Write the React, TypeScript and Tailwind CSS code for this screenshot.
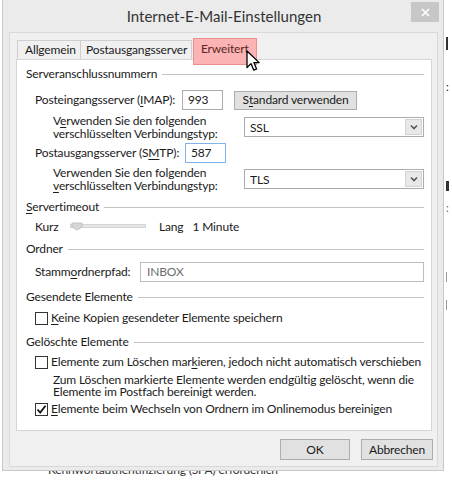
import React from "react";

const U = ({ children }: { children: React.ReactNode }) => (
  <span className="underline underline-offset-[2px] decoration-[1px]">{children}</span>
);

function Group({ title }: { title: React.ReactNode }) {
  return (
    <div className="flex h-[14px] items-center">
      <span className="whitespace-nowrap">{title}</span>
      <div className="ml-[5px] h-px flex-1 bg-[#c4c4c4]" />
    </div>
  );
}

function Select({ value }: { value: string }) {
  return (
    <div className="flex h-[20px] w-[180px] items-center border border-[#acacac] bg-white">
      <span className="flex-1 pl-[5px]">{value}</span>
      <div className="mr-px flex h-[16px] w-[17px] items-center justify-center border border-[#d2d2d2] bg-[#e8e8e8]">
        <svg width="8" height="6" viewBox="0 0 8 6">
          <path d="M1 1.5 L4 4.5 L7 1.5" fill="none" stroke="#555" strokeWidth="1.6" />
        </svg>
      </div>
    </div>
  );
}

function Checkbox({ checked }: { checked?: boolean }) {
  return (
    <div className="flex h-[13px] w-[13px] shrink-0 items-center justify-center border border-[#333] bg-white">
      {checked && (
        <svg width="11" height="11" viewBox="0 0 11 11">
          <path d="M1.5 5.5 L4.2 8.5 L9.5 1.8" fill="none" stroke="#111" strokeWidth="1.8" />
        </svg>
      )}
    </div>
  );
}

export default function App() {
  return (
    <div className="relative h-[480px] w-[452px] overflow-hidden bg-white font-['Lato','Noto_Sans',sans-serif] text-[12px] leading-[14px] tracking-[-0.15px] text-[#1a1a1a]">
      <div className="flex">
        <div className="w-[2px]" />
        {/* window */}
        <div className="flex h-[471px] w-[442px] flex-col border-x border-b border-[#c9c9c9] bg-[#ebebeb]">
          {/* title bar */}
          <div className="flex h-[32px] items-start">
            <div className="w-[28px]" />
            <div className="flex h-[32px] flex-1 items-center justify-center pl-[6px] text-[15px] tracking-normal text-[#333]">
              Internet-E-Mail-Einstellungen
            </div>
            <div className="mr-[4px] mt-[2px] flex h-[20px] w-[28px] items-center justify-center bg-[#c7c7c7]">
              <svg width="9" height="9" viewBox="0 0 9 9">
                <path d="M1 1 L8 8 M8 1 L1 8" stroke="#fff" strokeWidth="1.6" />
              </svg>
            </div>
          </div>
          {/* body */}
          <div className="ml-[6px] flex h-[435px] w-[429px] flex-col border border-[#d9d9d9] bg-[#f0f0f0] pl-[6px] pr-[4px] pt-[5px]">
            {/* tabs */}
            <div className="flex items-end pl-px">
              <div className="flex h-[19px] w-[64px] items-center border-x border-t border-[#cfcfcf] bg-[#f0f0f0] pl-[7px]">
                Allgemein
              </div>
              <div className="flex h-[19px] w-[111px] items-center border-r border-t border-[#cfcfcf] bg-[#f0f0f0] pl-[5px]">
                Postausgangsserver
              </div>
              <div className="relative z-10 mb-[-6px] ml-px h-[27px] w-[64px] border border-[#ec8f8f] bg-[#fbb3b3] pl-[7px] pt-[3px] text-[#5a2626]">
                Erweitert
              </div>
            </div>
            {/* panel */}
            <div className="flex h-[372px] w-[416px] flex-col border border-[#d6d6d6] bg-white pl-[9px] pr-[7px] pt-[7px]">
              <Group title="Serveranschlussnummern" />
              <div className="mt-[9px] flex h-[20px] items-center pl-[9px]">
                <span className="w-[147px]">
                  Posteingangsserver (<U>I</U>MAP):
                </span>
                <div className="flex h-[20px] w-[41px] items-center border border-[#abadb3] bg-white pl-[5px]">993</div>
                <div className="ml-[11px] flex h-[19px] w-[123px] items-center justify-center border border-[#adadad] bg-[#e1e1e1]">
                  S<U>t</U>andard verwenden
                </div>
              </div>
              <div className="mt-[4px] flex items-center pl-[27px] leading-[13px]">
                <div className="w-[191px]">
                  <div>
                    V<U>e</U>rwenden Sie den folgenden
                  </div>
                  <div>verschlüsselten Verbindungstyp:</div>
                </div>
                <Select value="SSL" />
              </div>
              <div className="mt-[3px] flex h-[20px] items-center pl-[9px]">
                <span className="w-[150px]">
                  Postausgangsserver (S<U>M</U>TP):
                </span>
                <div className="flex h-[20px] w-[41px] items-center border border-[#7eb4ea] bg-white pl-[5px]">587</div>
              </div>
              <div className="mt-[3px] flex items-center pl-[27px] leading-[13px]">
                <div className="w-[191px]">
                  <div>Verwenden Sie den folgenden</div>
                  <div>
                    <U>v</U>erschlüsselten Verbindungstyp:
                  </div>
                </div>
                <Select value="TLS" />
              </div>
              <div className="mt-[8px]">
                <Group
                  title={
                    <>
                      <U>S</U>ervertimeout
                    </>
                  }
                />
              </div>
              <div className="mt-[6px] flex h-[14px] items-center pl-[9px]">
                <span className="w-[35px]">Kurz</span>
                <svg width="76" height="10" viewBox="0 0 76 10">
                  <rect x="0.5" y="2.5" width="75" height="3" fill="#e6e6e6" stroke="#d4d4d4" />
                  <path d="M2 1 H12 V5 L7 8 L2 5 Z" fill="#d6d6d6" stroke="#c4c4c4" />
                </svg>
                <span className="ml-[13px]">Lang</span>
                <span className="ml-[9px]">1 Minute</span>
              </div>
              <div className="mt-[8px]">
                <Group title="Ordner" />
              </div>
              <div className="mt-[6px] flex h-[20px] items-center pl-[9px]">
                <span className="w-[105px]">
                  Stamm<U>o</U>rdnerpfad:
                </span>
                <div className="flex h-[20px] flex-1 items-center border border-[#bdbdbd] bg-white pl-[6px] text-[#6d6d6d]">
                  INBOX
                </div>
              </div>
              <div className="mt-[8px]">
                <Group title="Gesendete Elemente" />
              </div>
              <div className="mt-[7px] flex h-[14px] items-center gap-[3px] pl-[9px]">
                <Checkbox />
                <span>
                  <U>K</U>eine Kopien gesendeter Elemente speichern
                </span>
              </div>
              <div className="mt-[10px]">
                <Group title="Gelöschte Elemente" />
              </div>
              <div className="mt-[6px] flex h-[14px] items-center gap-[3px] pl-[9px]">
                <Checkbox />
                <span className="whitespace-nowrap">
                  Elemente zum Löschen mar<U>k</U>ieren, jedoch nicht automatisch verschieben
                </span>
              </div>
              <div className="mt-[5px] pl-[27px] leading-[12px]">
                <div className="whitespace-nowrap">Zum Löschen markierte Elemente werden endgültig gelöscht, wenn die</div>
                <div>Elemente im Postfach bereinigt werden.</div>
              </div>
              <div className="mt-[4px] flex h-[14px] items-center gap-[3px] pl-[9px]">
                <Checkbox checked />
                <span>
                  <U>E</U>lemente beim Wechseln von Ordnern im Onlinemodus bereinigen
                </span>
              </div>
            </div>
            {/* buttons */}
            <div className="mt-[8px] flex justify-end gap-[11px]">
              <div className="flex h-[21px] w-[70px] items-center justify-center border border-[#adadad] bg-[#e1e1e1]">OK</div>
              <div className="flex h-[21px] w-[72px] items-center justify-center border border-[#adadad] bg-[#e1e1e1]">Abbrechen</div>
            </div>
          </div>
        </div>
        {/* background app on the right */}
        <div className="flex w-[8px] flex-col overflow-hidden pl-[2px] text-[11px] leading-[13px] text-[#222]">
          <div className="mt-[37px] h-[13px] w-[6px] border-l-2 border-[#333]" />
          <div className="mt-[30px]">:</div>
          <div className="mt-[88px] h-[10px] w-[3px] bg-[#333]" />
          <div className="mt-[10px] text-[#666]">:</div>
          <div className="mt-[58px] h-[10px] w-px bg-[#999]" />
          <div className="mt-[18px] h-[10px] w-px bg-[#999]" />
        </div>
      </div>
      {/* background app below */}
      <div className="h-[9px] overflow-hidden pl-[48px]">
        <div className="-mt-[8px] whitespace-nowrap text-[12px] text-[#333]">Kennwortauthentifizierung (SPA) erforderlich</div>
      </div>
      {/* mouse cursor */}
      <svg className="absolute left-[246px] top-[50px] z-20" width="15" height="23" viewBox="0 0 15 23">
        <path d="M1 1 L1 17.5 L5 13.6 L7.8 20.2 L10.6 19 L7.9 12.6 L13.2 12.6 Z" fill="#fff" stroke="#000" strokeWidth="1.3" strokeLinejoin="round" />
      </svg>
    </div>
  );
}
